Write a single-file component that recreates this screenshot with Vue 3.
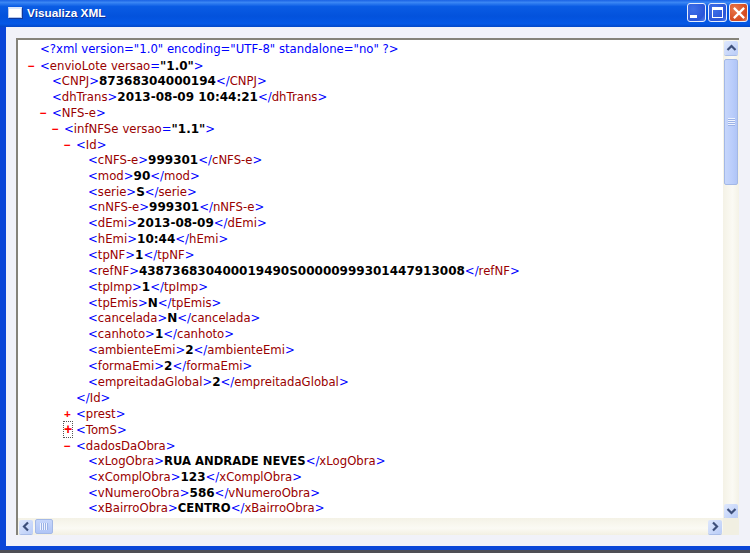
<template>
  <div class="window">
    <div class="titlebar">
      <div class="app-icon"></div>
      <span class="title">Visualiza XML</span>
      <div class="controls">
        <button class="ctl"><span class="min-glyph"></span></button>
        <button class="ctl"><span class="max-glyph"></span></button>
        <button class="ctl close">
          <svg width="14" height="14" viewBox="0 0 15 15"><path d="M2 2 L13 13 M13 2 L2 13" stroke="#fff" stroke-width="2.4" /></svg>
        </button>
      </div>
    </div>
    <div class="client">
      <div class="viewer">
        <div class="content">
          <div class="xml">
            <div v-for="(line, i) in lines" :key="i" class="line" :style="{ paddingLeft: line.d * 12 + 'px' }">
              <span class="mark" :class="{ focus: line.focus }">{{ line.m }}</span>
              <span v-if="line.pi" class="b">{{ line.pi }}</span>
              <template v-else-if="line.close">
                <span class="b">&lt;/</span><span class="r">{{ line.close }}</span><span class="b">&gt;</span>
              </template>
              <template v-else>
                <span class="b">&lt;</span><span class="r">{{ line.t }}</span>
                <template v-if="line.a">
                  <span class="r attr">{{ line.a }}</span><span class="b">=</span><span class="k">"{{ line.av }}"</span>
                </template>
                <span class="b">&gt;</span>
                <template v-if="line.v">
                  <span class="k" :class="{ caps: /[A-Z]{3}/.test(line.v) }">{{ line.v }}</span><span class="b">&lt;/</span><span class="r">{{ line.t }}</span><span class="b">&gt;</span>
                </template>
              </template>
            </div>
          </div>
        </div>
        <div class="vbar">
          <div class="sbtn">
            <svg width="11" height="8" viewBox="0 0 11 8"><path d="M1.5 6 L5.5 2 L9.5 6" fill="none" stroke="#3d4f7a" stroke-width="2.2" /></svg>
          </div>
          <div class="vthumb"><span class="grip"></span></div>
          <div class="track"></div>
          <div class="sbtn">
            <svg width="11" height="8" viewBox="0 0 11 8"><path d="M1.5 2 L5.5 6 L9.5 2" fill="none" stroke="#3d4f7a" stroke-width="2.2" /></svg>
          </div>
        </div>
        <div class="hbar">
          <div class="sbtn">
            <svg width="8" height="11" viewBox="0 0 8 11"><path d="M6 1.5 L2 5.5 L6 9.5" fill="none" stroke="#3d4f7a" stroke-width="2.2" /></svg>
          </div>
          <div class="hthumb"><span class="grip-h"></span></div>
          <div class="track"></div>
          <div class="sbtn">
            <svg width="8" height="11" viewBox="0 0 8 11"><path d="M2 1.5 L6 5.5 L2 9.5" fill="none" stroke="#3d4f7a" stroke-width="2.2" /></svg>
          </div>
        </div>
        <div class="corner"></div>
      </div>
    </div>
  </div>
</template>

<script setup>
const lines = [
  { d: 0, pi: '<?xml version="1.0" encoding="UTF-8" standalone="no" ?>' },
  { d: 0, m: "−", t: "envioLote", a: "versao", av: "1.0" },
  { d: 1, t: "CNPJ", v: "87368304000194" },
  { d: 1, t: "dhTrans", v: "2013-08-09 10:44:21" },
  { d: 1, m: "−", t: "NFS-e" },
  { d: 2, m: "−", t: "infNFSe", a: "versao", av: "1.1" },
  { d: 3, m: "−", t: "Id" },
  { d: 4, t: "cNFS-e", v: "999301" },
  { d: 4, t: "mod", v: "90" },
  { d: 4, t: "serie", v: "S" },
  { d: 4, t: "nNFS-e", v: "999301" },
  { d: 4, t: "dEmi", v: "2013-08-09" },
  { d: 4, t: "hEmi", v: "10:44" },
  { d: 4, t: "tpNF", v: "1" },
  { d: 4, t: "refNF", v: "438736830400019490S00000999301447913008" },
  { d: 4, t: "tpImp", v: "1" },
  { d: 4, t: "tpEmis", v: "N" },
  { d: 4, t: "cancelada", v: "N" },
  { d: 4, t: "canhoto", v: "1" },
  { d: 4, t: "ambienteEmi", v: "2" },
  { d: 4, t: "formaEmi", v: "2" },
  { d: 4, t: "empreitadaGlobal", v: "2" },
  { d: 3, close: "Id" },
  { d: 3, m: "+", t: "prest" },
  { d: 3, m: "+", t: "TomS", focus: true },
  { d: 3, m: "−", t: "dadosDaObra" },
  { d: 4, t: "xLogObra", v: "RUA ANDRADE NEVES" },
  { d: 4, t: "xComplObra", v: "123" },
  { d: 4, t: "vNumeroObra", v: "586" },
  { d: 4, t: "xBairroObra", v: "CENTRO" },
];
</script>

<style>
html,
body {
  margin: 0;
  overflow: hidden;
}
</style>

<style scoped>
.window {
  width: 750px;
  height: 553px;
  box-sizing: border-box;
  display: flex;
  flex-direction: column;
  background: #0a46d8;
  border-bottom: 3px solid #4f4f55;
  font-family: "DejaVu Sans", Verdana, sans-serif;
}
.titlebar {
  height: 27px;
  flex: none;
  display: flex;
  align-items: center;
  padding: 0 2px 2px 8px;
  box-sizing: border-box;
  background: linear-gradient(180deg, #1a62e4 0%, #3a86f4 9%, #0a5ce4 24%, #0352dc 60%, #0558e6 88%, #0348c8 100%);
}
.app-icon {
  width: 12px;
  height: 8px;
  background: #fff;
  border: 1px solid #b6c8ee;
  border-top: 2px solid #dce8fb;
  box-shadow: 1px 1px 0 #123a9a;
}
.title {
  margin-left: 5px;
  color: #fff;
  font: bold 11.8px "Liberation Sans", Arial, sans-serif;
  text-shadow: 1px 1px 0 #0f2f9a;
}
.controls {
  margin-left: auto;
  display: flex;
  gap: 2px;
}
.ctl {
  width: 19px;
  height: 19px;
  box-sizing: border-box;
  padding: 0;
  display: flex;
  align-items: center;
  justify-content: center;
  border: 1px solid #e6edfc;
  border-radius: 3px;
  background: radial-gradient(circle at 30% 30%, #3f70e8, #2a55d8 70%, #5a86ee);
}
.close {
  background: radial-gradient(circle at 30% 30%, #e8784c, #d4491f 70%, #e48a66);
}
.min-glyph {
  width: 7px;
  height: 3px;
  background: #fff;
  align-self: flex-end;
  margin: 0 6px 3px 0;
}
.max-glyph {
  width: 9px;
  height: 7px;
  border: 1px solid #fff;
  border-top-width: 3px;
}
.client {
  flex: 1;
  min-height: 0;
  margin: 0 0 4px 6px;
  background: #f1f2f9;
  padding: 11px 11px 11px 10px;
  display: flex;
}
.viewer {
  flex: 1;
  min-width: 0;
  display: grid;
  grid-template-columns: 1fr 16px;
  grid-template-rows: 1fr 17px;
  border-left: 2px solid #85837a;
  border-top: 2px solid #85837a;
  background: #fff;
}
.content {
  overflow: hidden;
  background: #fff;
  min-height: 0;
}
.xml {
  padding-top: 2px;
  font-size: 11.7px;
  line-height: 15.85px;
}
.line {
  margin-left: 22px;
  white-space: pre;
  height: 15.85px;
}
.mark {
  display: inline-block;
  width: 12px;
  margin-left: -12px;
  color: #f00;
  font-weight: bold;
  font-family: "Liberation Sans", sans-serif;
}
.focus {
  outline: 1px dotted #555;
  width: 8px;
  margin-right: 4px;
  text-align: center;
  font-size: 14px;
  line-height: 15px;
}
.b {
  color: #00f;
}
.r {
  color: #990000;
}
.attr {
  margin-left: 4px;
}
.k {
  color: #000;
  font-weight: bold;
  font-size: 12px;
}
.caps {
  font-size: 11.6px;
}
.vbar {
  display: flex;
  flex-direction: column;
  align-items: flex-end;
  padding-top: 1px;
  background: linear-gradient(90deg, #f4f2e6, #fbfaf4 60%, #f4f2e6);
}
.hbar {
  display: flex;
  align-items: center;
  padding: 0 1px;
  background: linear-gradient(180deg, #f4f2e6, #fbfaf4 60%, #f2f0e2);
}
.track {
  flex: 1;
}
.sbtn {
  flex: none;
  width: 14px;
  height: 14px;
  box-sizing: border-box;
  display: flex;
  align-items: center;
  justify-content: center;
  border-radius: 2px;
  background: linear-gradient(135deg, #dfe8fd, #b9ccf7);
  box-shadow: 0 1px 0 #a9bde8;
}
.vbar .sbtn {
  margin: 0 1px 0 0;
}
.vthumb {
  width: 14px;
  height: 126px;
  margin: 4px 1px 0 0;
  box-sizing: border-box;
  display: flex;
  align-items: center;
  justify-content: center;
  border: 1px solid #a3b8e6;
  border-radius: 2px;
  background: linear-gradient(90deg, #c6d6fb, #bacdfb 60%, #b0c5f6);
}
.hthumb {
  width: 18px;
  height: 15px;
  margin-left: 2px;
  box-sizing: border-box;
  display: flex;
  align-items: center;
  justify-content: center;
  border: 1px solid #a3b8e6;
  border-radius: 2px;
  background: linear-gradient(180deg, #c6d6fb, #b0c5f6);
}
.grip {
  width: 7px;
  height: 8px;
  background: repeating-linear-gradient(180deg, #eef3ff 0 1px, #9bb2e6 1px 2px);
}
.grip-h {
  width: 8px;
  height: 7px;
  background: repeating-linear-gradient(90deg, #eef3ff 0 1px, #9bb2e6 1px 2px);
}
.corner {
  background: #f1efe2;
}
</style>
